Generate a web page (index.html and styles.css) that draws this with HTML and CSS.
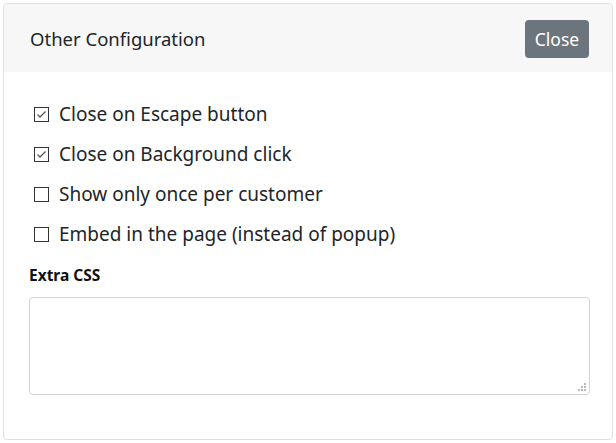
FILE: index.html
```html
<!DOCTYPE html>
<html>
<head>
<meta charset="utf-8">
<link rel="stylesheet" href="styles.css">
</head>
<body>
<div class="card">
  <div class="card-header">
    <h5 class="title">Other Configuration</h5>
    <button class="btn">Close</button>
  </div>
  <div class="card-body">
    <label class="check"><span class="box on"><svg width="13" height="13" viewBox="0 0 13 13"><path d="M2.5 6.5 L5 9 L10.5 3.5" fill="none" stroke="#555" stroke-width="1.3"/></svg></span>Close on Escape button</label>
    <label class="check"><span class="box on"><svg width="13" height="13" viewBox="0 0 13 13"><path d="M2.5 6.5 L5 9 L10.5 3.5" fill="none" stroke="#555" stroke-width="1.3"/></svg></span>Close on Background click</label>
    <label class="check"><span class="box"></span>Show only once per customer</label>
    <label class="check"><span class="box"></span>Embed in the page (instead of popup)</label>
    <div class="field-label">Extra CSS</div>
    <div class="textarea"><svg class="grip" width="10" height="10" viewBox="0 0 10 10"><g fill="#bbb"><rect x="7" y="1" width="2" height="2"/><rect x="4" y="4" width="2" height="2"/><rect x="7" y="4" width="2" height="2"/><rect x="1" y="7" width="2" height="2"/><rect x="4" y="7" width="2" height="2"/><rect x="7" y="7" width="2" height="2"/></g></svg></div>
  </div>
</div>
</body>
</html>
```
FILE: styles.css
```css
html, body {
  margin: 0;
  padding: 0;
  background: #fff;
}
body {
  padding: 3px;
  font-family: "Noto Sans", "Open Sans", sans-serif;
  color: #212529;
}
.card {
  width: 610px;
  height: 437px;
  box-sizing: border-box;
  border: 1px solid #dfdfdf;
  border-radius: 4px;
  overflow: hidden;
}
.card-header {
  height: 68px;
  background: #f7f7f7;
  display: flex;
  align-items: center;
  justify-content: space-between;
  padding: 0 23px 0 26px;
}
.title {
  margin: 0;
  font-size: 18.5px;
  font-weight: 400;
  color: #212529;
}
.btn {
  width: 64px;
  height: 38px;
  margin-top: 2px;
  background: #6c757d;
  color: #fff;
  border: none;
  border-radius: 4px;
  font-family: inherit;
  font-size: 17.5px;
  padding: 0;
}
.card-body {
  padding: 22px 22px 0 25px;
}
.check {
  display: flex;
  align-items: center;
  height: 40px;
  font-size: 19px;
  color: #212529;
}
.box {
  width: 13px;
  height: 13px;
  border: 1px solid #333;
  margin: 0 10px 0 5px;
  display: flex;
  flex: none;
}
.field-label {
  margin-top: 10px;
  font-size: 15.5px;
  font-weight: 700;
  color: #111;
  height: 27px;
}
.textarea {
  margin-top: 6px;
  height: 98px;
  box-sizing: border-box;
  border: 1px solid #ced4da;
  border-radius: 4px;
  position: relative;
}
.grip {
  position: absolute;
  right: 2px;
  bottom: 2px;
}
```
